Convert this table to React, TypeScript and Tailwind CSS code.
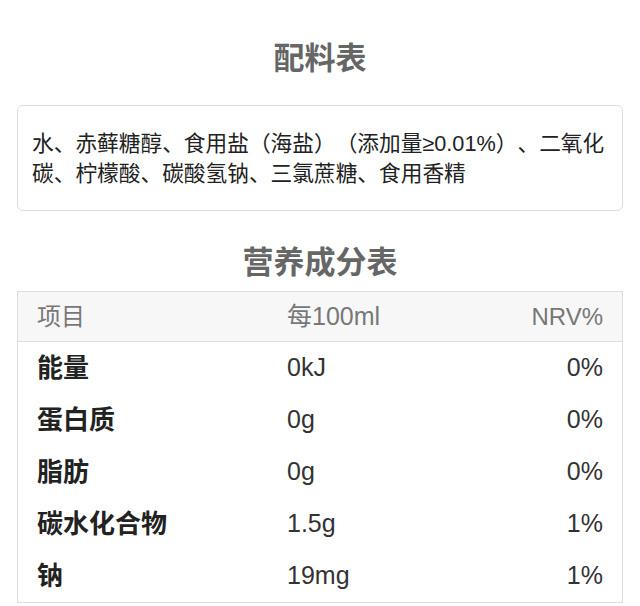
import React from "react";

const rows = [
  { name: "能量", per: "0kJ", nrv: "0%" },
  { name: "蛋白质", per: "0g", nrv: "0%" },
  { name: "脂肪", per: "0g", nrv: "0%" },
  { name: "碳水化合物", per: "1.5g", nrv: "1%" },
  { name: "钠", per: "19mg", nrv: "1%" },
];

export default function App() {
  return (
    <div
      className="w-[640px] h-[606px] bg-white overflow-hidden [text-spacing-trim:space-all]"
      style={{ fontFamily: '"Liberation Sans", "Noto Sans CJK SC", sans-serif' }}
    >
      <h2 className="pt-[39px] text-center text-[31px] leading-[40px] font-bold text-[#666]">配料表</h2>
      <div className="mt-[26px] ml-[17px] w-[606px] border border-[#dddddd] rounded-[6px] px-[14px] pt-[23px] pb-[21px] text-[21.7px] leading-[30px] text-[#222] [text-spacing-trim:space-all]">
        水、赤藓糖醇、食用盐（海盐）（添加量≥0.01%）、二氧化碳、柠檬酸、碳酸氢钠、三氯蔗糖、食用香精
      </div>
      <h2 className="mt-[32px] text-center text-[31px] leading-[40px] font-bold text-[#666]">营养成分表</h2>
      <div className="mt-[8px] ml-[17px] w-[606px] border border-[#dddddd]">
        <div className="grid grid-cols-[250px_1fr_auto] items-center h-[50px] bg-[#f7f7f7] border-b border-[#dddddd] px-[19px] text-[25px] text-[#777]">
          <span className="text-[24px]">项目</span>
          <span>每100ml</span>
          <span className="text-[24px]">NRV%</span>
        </div>
        {rows.map((r) => (
          <div key={r.name} className="grid grid-cols-[250px_1fr_auto] items-center h-[52px] px-[19px] text-[25px] text-[#222]">
            <span className="font-bold text-[26px]">{r.name}</span>
            <span className="text-[#333]">{r.per}</span>
            <span className="text-[#333]">{r.nrv}</span>
          </div>
        ))}
      </div>
    </div>
  );
}
